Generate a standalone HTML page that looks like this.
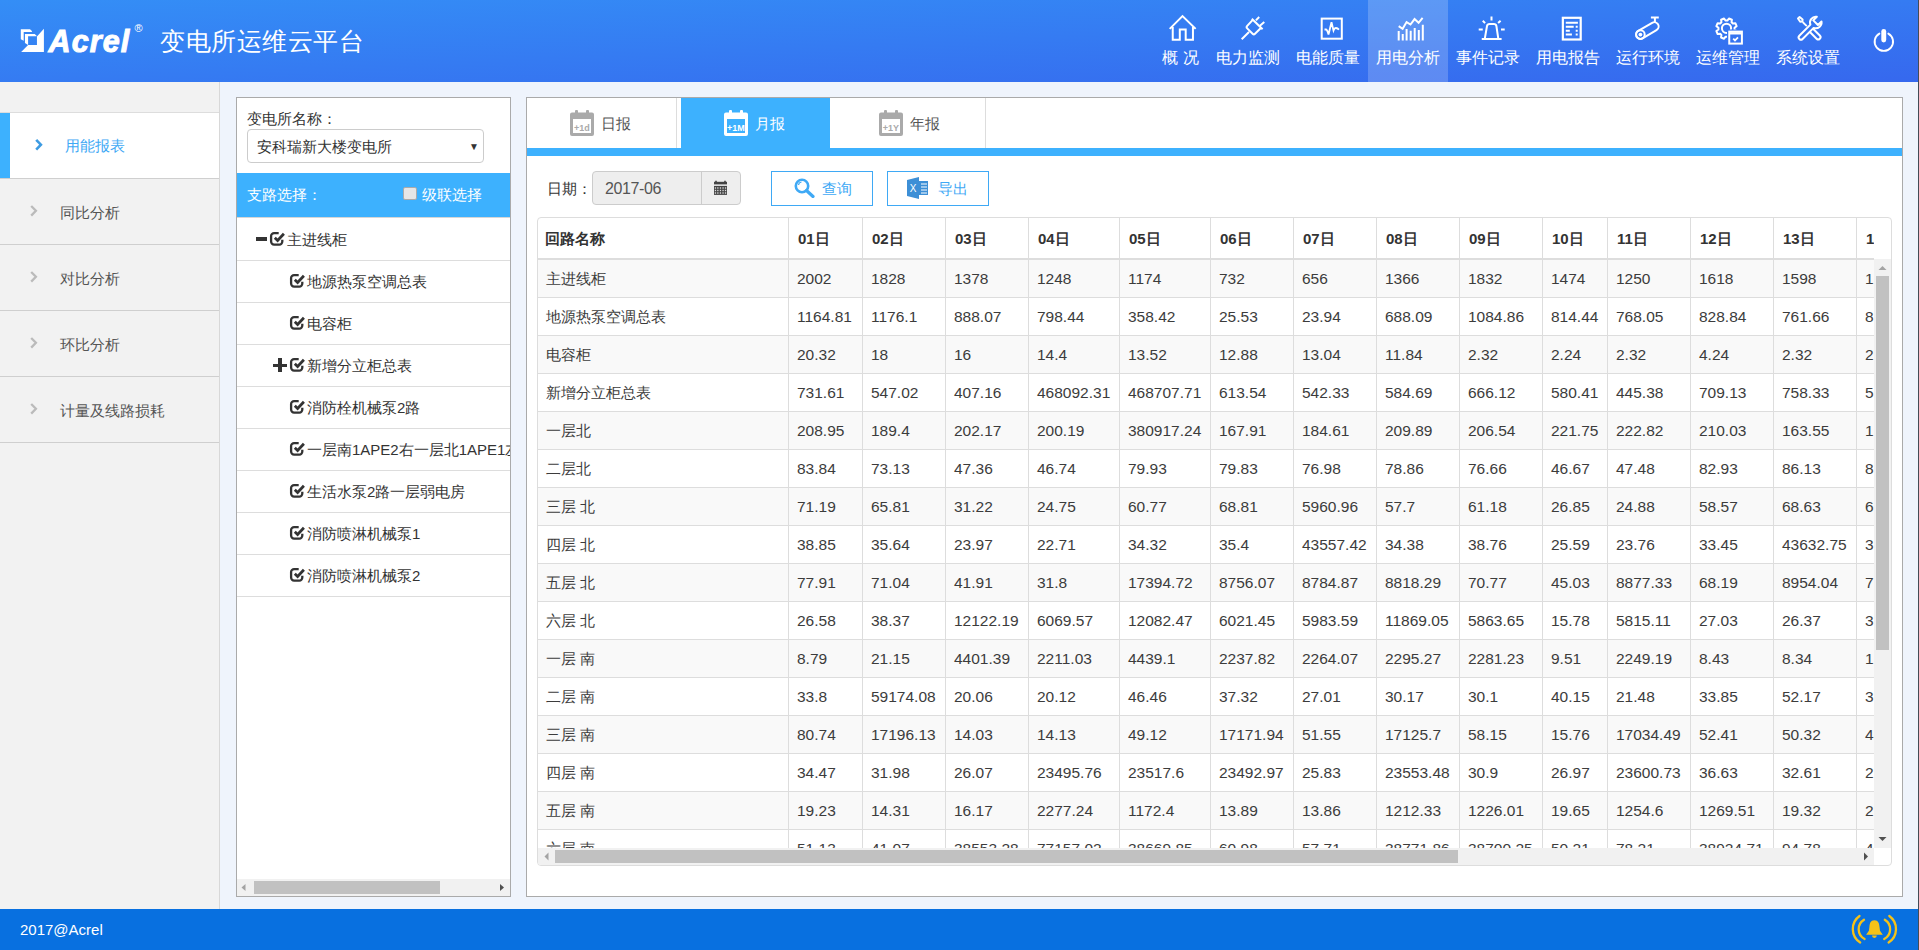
<!DOCTYPE html>
<html><head><meta charset="utf-8">
<style>
*{box-sizing:border-box;margin:0;padding:0}
html,body{width:1919px;height:950px;overflow:hidden}
body{position:relative;background:#eff4fc;font-family:"Liberation Sans",sans-serif;font-size:15px;color:#333}
.abs{position:absolute}
#hdr{left:0;top:0;width:1919px;height:82px;background:linear-gradient(to bottom right,rgb(52,142,246),rgb(54,104,238))}
#hdr .nav{position:absolute;top:0;height:82px;color:#fff;text-align:center}
#hdr .nav .ic{position:absolute;top:14px;left:50%;margin-left:-15px;width:30px;height:30px}
#hdr .nav .tx{position:absolute;top:49px;left:0;width:100%;font-size:15.5px;line-height:18px;white-space:nowrap}
#hdr .nav.act{background:rgba(255,255,255,0.2)}
#side{left:0;top:82px;width:220px;height:827px;background:#f2f2f2;border-right:1px solid #d8d8d8}
.mi{position:absolute;left:0;width:219px;height:66px;border-bottom:1px solid #cfcfcf;color:#555;font-size:15px;line-height:65px}
.mi .chev{position:absolute;left:30px;top:0;color:#bbb}
.mi .t{position:absolute;left:60px;top:0.5px}
.mi.act{background:#fff;color:#3fa9f5}
.mi.act .bar{position:absolute;left:0;top:0;width:10px;height:65px;background:#3db1fe}
.mi.act .chev{left:35px;color:#3fa9f5}
.mi.act .t{left:65px;top:-0.5px}
#pl{left:236px;top:97px;width:275px;height:800px;background:#fff;border:1px solid #aaa}
#pr{left:526px;top:97px;width:1377px;height:800px;background:#fff;border:1px solid #aaa}
.tree-row{position:absolute;left:0;width:273px;height:42px;border-bottom:1px solid #ddd;line-height:41px;white-space:nowrap;overflow:hidden;font-size:15px;color:#333}
.tbl{position:absolute;left:537px;top:217px;width:1355px;height:649px;border:1px solid #ddd;border-radius:4px;background:#fff;overflow:hidden}
.th{position:absolute;top:0;height:40px;line-height:41px;padding-left:9px;font-weight:bold;border-left:1px solid #ddd;white-space:nowrap;overflow:hidden}
.th:first-child{border-left:none;padding-left:8px}
#thead{position:absolute;left:-1px;top:0;width:1337px;height:42px;border-bottom:2px solid #ddd;overflow:hidden}
#tbody{position:absolute;left:-1px;top:42px;width:1337px;height:588px;overflow:hidden}
.tr{position:absolute;left:0;width:1400px;height:38px;border-bottom:1px solid #ddd;background:#fff}
.tr.odd{background:#f9f9f9}
.td{position:absolute;top:0;height:37px;line-height:37px;padding-top:0;padding-left:8px;border-left:1px solid #ddd;white-space:nowrap;overflow:hidden;font-size:15.5px;color:#3c3c3c}
.td:first-child{border-left:none;padding-left:9px;padding-top:0;font-size:15px;line-height:38px}
</style></head><body>

<!-- HEADER -->
<div id="hdr" class="abs">
  <svg class="abs" style="left:18px;top:26px" width="30" height="30" viewBox="0 0 30 30"><g fill="#fff">
    <path d="M2.8 3.2 H12 L13.9 5.1 V6 H5.7 V14.8 L2.8 13.3 Z"/>
    <path d="M6.95 7.9 H16.7 L18.6 9.8 V10.3 H10.1 V19 L6.95 17 Z"/>
    <path d="M25.9 2.85 V25.9 H3.16 L10.1 18.95 H18.95 V10.4 Z"/></g>
  </svg>
  <div class="abs" style="left:48.5px;top:21px;font-size:30.5px;line-height:40px;font-weight:bold;font-style:italic;color:#fff;letter-spacing:1.1px;-webkit-text-stroke:1px #fff">Acrel</div>
  <div class="abs" style="left:134.5px;top:22px;font-size:11px;line-height:12px;color:#fff">&#174;</div>
  <div class="abs" style="left:160px;top:26px;font-size:25px;letter-spacing:0.55px;line-height:30px;color:#fff">变电所运维云平台</div>
  <div class="abs" style="left:1368px;top:0;width:80px;height:82px;background:rgba(255,255,255,0.2)"></div>
  <div class="nav" style="left:1153px;width:55px"><div class="tx">概 况</div></div>
  <div class="nav" style="left:1208px;width:80px"><div class="tx">电力监测</div></div>
  <div class="nav" style="left:1288px;width:80px"><div class="tx">电能质量</div></div>
  <div class="nav" style="left:1368px;width:80px"><div class="tx">用电分析</div></div>
  <div class="nav" style="left:1448px;width:80px"><div class="tx">事件记录</div></div>
  <div class="nav" style="left:1528px;width:80px"><div class="tx">用电报告</div></div>
  <div class="nav" style="left:1608px;width:80px"><div class="tx">运行环境</div></div>
  <div class="nav" style="left:1688px;width:80px"><div class="tx">运维管理</div></div>
  <div class="nav" style="left:1768px;width:80px"><div class="tx">系统设置</div></div>
  <svg class="abs" style="left:0;top:0" width="1919" height="82" viewBox="0 0 1919 82">
   <defs><mask id="gm"><rect x="1700" y="0" width="60" height="60" fill="#fff"/><rect x="1727" y="29.5" width="18" height="18" fill="#000"/></mask></defs>
   <g fill="none" stroke="#fff" stroke-width="2">
    <path d="M1169.7 28.85 L1182.5 16.04 L1195.65 28.85 M1172.74 27 V39.8 H1179.8 V29.5 H1185.7 V39.8 H1192.95 V27"/>
    <path d="M1241.7 39.3 L1249 32 M1251.8 18.7 L1262.6 29.2 M1252.3 20.3 L1247.2 25.9 Q1246 27.2 1247.2 28.4 L1252.6 33.8 Q1253.8 35 1255 33.8 L1260.6 28.2 M1255.9 20.4 L1259.2 17.05 M1260.2 25.5 L1264.3 22.1"/>
    <rect x="1321.7" y="18.6" width="20.1" height="20.1"/>
    <path d="M1324.5 29.5 L1326 29.5 Q1327.3 29.8 1328.5 34.5 L1331.5 22.3 L1333.5 30.5 Q1334.5 27.8 1336 28 Q1337.5 28.2 1339 29.7" stroke-width="1.8"/>
    <path d="M1398.7 40.6 V30.9 M1402.76 40.6 V33.9 M1406.6 40.6 V29 M1410.7 40.6 V30.7 M1414.7 40.6 V28 M1418.8 40.6 V29.9 M1422.8 40.6 V24.8"/>
    <path d="M1398.7 26.15 L1402.6 28.8 L1406.6 22.1 L1410.5 24.5 L1414.55 19.1 L1418.6 22.8 L1422.6 17.9"/>
    <path d="M1491.5 16.5 V20.4 M1482.76 20.76 L1485.1 23.1 M1500.6 20.76 L1498.1 23.1 M1478.7 29.5 H1482.76 M1501 29.5 H1504.7"/>
    <path d="M1484.8 38.6 L1487 26 Q1487.4 24.1 1489.5 24.1 H1493.9 Q1496 24.1 1496.4 26 L1498.3 38.6 M1481.75 39 H1501.6"/>
    <rect x="1562.85" y="17.8" width="17.85" height="21.7" stroke-width="2.2"/>
    <path d="M1565.8 22.8 H1577.9 M1565.8 26.65 H1573.7 M1565.8 30.7 H1569.8 M1565.8 34.6 H1571.9 M1575.7 26.65 H1577.7 M1575.7 30.7 H1577.7 M1575.7 34.6 H1577.7"/>
    <rect x="1635" y="26.25" width="24.7" height="8.6" rx="4.3" transform="rotate(-30.2 1647.35 30.55)"/>
    <circle cx="1640.4" cy="34.6" r="4.3"/>
    <path d="M1654.9 18.2 V22.6 M1650.9 17.56 H1658.8"/>
    <g mask="url(#gm)"><path d="M1734.55 29.49 L1736.61 31.03 L1735.37 34.03 L1732.82 33.66 L1731.56 34.92 L1731.93 37.47 L1728.93 38.71 L1727.39 36.65 L1725.61 36.65 L1724.07 38.71 L1721.07 37.47 L1721.44 34.92 L1720.18 33.66 L1717.63 34.03 L1716.39 31.03 L1718.45 29.49 L1718.45 27.71 L1716.39 26.17 L1717.63 23.17 L1720.18 23.54 L1721.44 22.28 L1721.07 19.73 L1724.07 18.49 L1725.61 20.55 L1727.39 20.55 L1728.93 18.49 L1731.93 19.73 L1731.56 22.28 L1732.82 23.54 L1735.37 23.17 L1736.61 26.17 L1734.55 27.71 Z" stroke-linejoin="round"/>
    <circle cx="1726.5" cy="28.3" r="4.6"/></g>
    <rect x="1729.25" y="31.6" width="12.65" height="12" stroke-width="2"/>
    <path d="M1729.25 33.3 H1741.9" stroke-width="2.4"/>
    <path d="M1733.2 38.6 L1735 40.4 L1738 37.4" stroke-width="1.8"/>
    <g transform="translate(1794 14)" stroke-linejoin="round"><path d="M27.5 7.46 L23.92 11.04 L19.26 6.38 L22.84 2.8 A5.8 5.8 0 0 0 16.41 10.63 L5.32 21.72 A2.3 2.3 0 0 0 8.58 24.98 L19.67 13.89 A5.8 5.8 0 0 0 27.5 7.46 Z"/>
    <path d="M4 4.5 L5.6 3.1 L8.6 5.6 L8.3 7.4 L6.2 7.7 Z"/><path d="M8.6 8 L12.8 12.2" stroke-width="1.8"/>
    <path d="M18.6 14.25 L25.83 21.47 A2.3 2.3 0 0 1 22.57 24.73 L15.9 18.05"/></g>
    <path d="M1879.4 33.6 A9.2 9.2 0 1 0 1888.3 33.6" stroke-width="1.9" stroke-linecap="round"/>
   </g>
   <g fill="#fff"><circle cx="1640.4" cy="34.6" r="1.9"/><rect x="1881.3" y="29" width="4.9" height="13.5" rx="2.45"/></g>
  </svg>
</div>
<div class="abs" style="left:1918px;top:0;width:1px;height:950px;background:#434c56"></div>

<!-- SIDEBAR -->
<div id="side" class="abs">
  <div class="mi act" style="top:30px;border-top:1px solid #ddd;height:67px"><div class="bar"></div><svg class="abs" style="left:0;top:0" width="60" height="66"><path d="M36.2 26.8 L40.9 31.7 L36.2 36.6" fill="none" stroke="#3d9be2" stroke-width="2.6"/></svg><span class="t">用能报表</span></div>
  <div class="mi" style="top:97px"><svg class="abs" style="left:0;top:0" width="60" height="66"><path d="M31.2 27 L35.9 31.8 L31.2 36.6" fill="none" stroke="#bbb" stroke-width="2.3"/></svg><span class="t">同比分析</span></div>
  <div class="mi" style="top:163px"><svg class="abs" style="left:0;top:0" width="60" height="66"><path d="M31.2 27 L35.9 31.8 L31.2 36.6" fill="none" stroke="#bbb" stroke-width="2.3"/></svg><span class="t">对比分析</span></div>
  <div class="mi" style="top:229px"><svg class="abs" style="left:0;top:0" width="60" height="66"><path d="M31.2 27 L35.9 31.8 L31.2 36.6" fill="none" stroke="#bbb" stroke-width="2.3"/></svg><span class="t">环比分析</span></div>
  <div class="mi" style="top:295px"><svg class="abs" style="left:0;top:0" width="60" height="66"><path d="M31.2 27 L35.9 31.8 L31.2 36.6" fill="none" stroke="#bbb" stroke-width="2.3"/></svg><span class="t">计量及线路损耗</span></div>
</div>

<!-- LEFT PANEL -->
<div id="pl" class="abs">
  <div class="abs" style="left:10px;top:11px;line-height:20px">变电所名称：</div>
  <div class="abs" style="left:10px;top:31px;width:237px;height:34px;border:1px solid #ccc;border-radius:4px;line-height:34px;padding-left:9px;font-size:15px">安科瑞新大楼变电所<span class="abs" style="left:221px;top:0;font-size:10px">&#9660;</span></div>
  <div class="abs" style="left:0;top:75px;width:273px;height:44px;background:#3db1fe;color:#fff;line-height:44px;border-bottom:1px solid #d6d6d6;height:45px">
    <span class="abs" style="left:10px">支路选择：</span>
    <span class="abs" style="left:166px;top:14px;width:14px;height:13px;background:#e6e6e6;border:1px solid #aaa;border-radius:2px"></span>
    <span class="abs" style="left:185px">级联选择</span>
  </div>
  <div class="abs" style="left:0;top:121px;width:273px;height:380px">
    <div class="tree-row" style="top:0px"><div class="abs" style="left:18.5px;top:18.2px;width:11px;height:3.7px;background:#333"></div><svg class="abs" style="left:31px;top:11px" width="19" height="18" viewBox="0 0 19 18"><path d="M10.7 3.1 H6.1 A3 3 0 0 0 3.1 6.1 V11.6 A3 3 0 0 0 6.1 14.6 H11.3 A3 3 0 0 0 14.3 11.6 V9.7" fill="none" stroke="#333" stroke-width="2.3"/><path d="M6.8 7.7 L9.6 10.4 L15.9 3.8" fill="none" stroke="#333" stroke-width="2.8"/></svg><span class="abs" style="left:50px">主进线柜</span></div><div class="tree-row" style="top:42px"><svg class="abs" style="left:51px;top:11px" width="19" height="18" viewBox="0 0 19 18"><path d="M10.7 3.1 H6.1 A3 3 0 0 0 3.1 6.1 V11.6 A3 3 0 0 0 6.1 14.6 H11.3 A3 3 0 0 0 14.3 11.6 V9.7" fill="none" stroke="#333" stroke-width="2.3"/><path d="M6.8 7.7 L9.6 10.4 L15.9 3.8" fill="none" stroke="#333" stroke-width="2.8"/></svg><span class="abs" style="left:70px">地源热泵空调总表</span></div><div class="tree-row" style="top:84px"><svg class="abs" style="left:51px;top:11px" width="19" height="18" viewBox="0 0 19 18"><path d="M10.7 3.1 H6.1 A3 3 0 0 0 3.1 6.1 V11.6 A3 3 0 0 0 6.1 14.6 H11.3 A3 3 0 0 0 14.3 11.6 V9.7" fill="none" stroke="#333" stroke-width="2.3"/><path d="M6.8 7.7 L9.6 10.4 L15.9 3.8" fill="none" stroke="#333" stroke-width="2.8"/></svg><span class="abs" style="left:70px">电容柜</span></div><div class="tree-row" style="top:126px"><div class="abs" style="left:36px;top:18.5px;width:14px;height:3.5px;background:#333"></div><div class="abs" style="left:41.2px;top:13.2px;width:3.5px;height:13.6px;background:#333"></div><svg class="abs" style="left:51px;top:11px" width="19" height="18" viewBox="0 0 19 18"><path d="M10.7 3.1 H6.1 A3 3 0 0 0 3.1 6.1 V11.6 A3 3 0 0 0 6.1 14.6 H11.3 A3 3 0 0 0 14.3 11.6 V9.7" fill="none" stroke="#333" stroke-width="2.3"/><path d="M6.8 7.7 L9.6 10.4 L15.9 3.8" fill="none" stroke="#333" stroke-width="2.8"/></svg><span class="abs" style="left:70px">新增分立柜总表</span></div><div class="tree-row" style="top:168px"><svg class="abs" style="left:51px;top:11px" width="19" height="18" viewBox="0 0 19 18"><path d="M10.7 3.1 H6.1 A3 3 0 0 0 3.1 6.1 V11.6 A3 3 0 0 0 6.1 14.6 H11.3 A3 3 0 0 0 14.3 11.6 V9.7" fill="none" stroke="#333" stroke-width="2.3"/><path d="M6.8 7.7 L9.6 10.4 L15.9 3.8" fill="none" stroke="#333" stroke-width="2.8"/></svg><span class="abs" style="left:70px">消防栓机械泵2路</span></div><div class="tree-row" style="top:210px"><svg class="abs" style="left:51px;top:11px" width="19" height="18" viewBox="0 0 19 18"><path d="M10.7 3.1 H6.1 A3 3 0 0 0 3.1 6.1 V11.6 A3 3 0 0 0 6.1 14.6 H11.3 A3 3 0 0 0 14.3 11.6 V9.7" fill="none" stroke="#333" stroke-width="2.3"/><path d="M6.8 7.7 L9.6 10.4 L15.9 3.8" fill="none" stroke="#333" stroke-width="2.8"/></svg><span class="abs" style="left:70px">一层南1APE2右一层北1APE1左</span></div><div class="tree-row" style="top:252px"><svg class="abs" style="left:51px;top:11px" width="19" height="18" viewBox="0 0 19 18"><path d="M10.7 3.1 H6.1 A3 3 0 0 0 3.1 6.1 V11.6 A3 3 0 0 0 6.1 14.6 H11.3 A3 3 0 0 0 14.3 11.6 V9.7" fill="none" stroke="#333" stroke-width="2.3"/><path d="M6.8 7.7 L9.6 10.4 L15.9 3.8" fill="none" stroke="#333" stroke-width="2.8"/></svg><span class="abs" style="left:70px">生活水泵2路一层弱电房</span></div><div class="tree-row" style="top:294px"><svg class="abs" style="left:51px;top:11px" width="19" height="18" viewBox="0 0 19 18"><path d="M10.7 3.1 H6.1 A3 3 0 0 0 3.1 6.1 V11.6 A3 3 0 0 0 6.1 14.6 H11.3 A3 3 0 0 0 14.3 11.6 V9.7" fill="none" stroke="#333" stroke-width="2.3"/><path d="M6.8 7.7 L9.6 10.4 L15.9 3.8" fill="none" stroke="#333" stroke-width="2.8"/></svg><span class="abs" style="left:70px">消防喷淋机械泵1</span></div><div class="tree-row" style="top:336px"><svg class="abs" style="left:51px;top:11px" width="19" height="18" viewBox="0 0 19 18"><path d="M10.7 3.1 H6.1 A3 3 0 0 0 3.1 6.1 V11.6 A3 3 0 0 0 6.1 14.6 H11.3 A3 3 0 0 0 14.3 11.6 V9.7" fill="none" stroke="#333" stroke-width="2.3"/><path d="M6.8 7.7 L9.6 10.4 L15.9 3.8" fill="none" stroke="#333" stroke-width="2.8"/></svg><span class="abs" style="left:70px">消防喷淋机械泵2</span></div>
  </div>
  <div class="abs" style="left:0;top:781px;width:273px;height:17px;background:#f1f1f1">
    <div class="abs" style="left:17px;top:2px;width:186px;height:13px;background:#c1c1c1"></div>
    <svg class="abs" style="left:0;top:0" width="273" height="17"><path d="M8.5 5 L4.5 8.5 L8.5 12 Z" fill="#a3a3a3"/><path d="M263 5 L267 8.5 L263 12 Z" fill="#505050"/></svg>
  </div>
</div>

<!-- RIGHT PANEL -->
<div id="pr" class="abs">
  <div class="abs" style="left:0;top:0;width:150px;height:50px;border-right:1px solid #ddd"></div>
  <div class="abs" style="left:154px;top:0;width:149px;height:50px;background:#3db1fe"></div>
  <div class="abs" style="left:303px;top:0;width:156px;height:50px;border-right:1px solid #ddd"></div>
  <div class="abs" style="left:0;top:50px;width:1375px;height:8px;background:#3db1fe"></div>
  <svg class="abs" style="left:43px;top:12px" width="24" height="26" viewBox="0 0 24 26"><g fill="#aaa"><rect x="5" y="0" width="3" height="4" rx="1"/><rect x="16" y="0" width="3" height="4" rx="1"/><path d="M2 2.5 H22 A2 2 0 0 1 24 4.5 V24 A2 2 0 0 1 22 26 H2 A2 2 0 0 1 0 24 V4.5 A2 2 0 0 1 2 2.5 Z M3 9 V23 H21 V9 Z"/></g><text x="12" y="20.5" text-anchor="middle" font-family="Liberation Sans" font-weight="bold" font-size="9" fill="#aaa">+1d</text></svg><div class="abs" style="left:74px;top:15px;font-size:15px;line-height:22px;color:#555">日报</div><svg class="abs" style="left:197px;top:12px" width="24" height="26" viewBox="0 0 24 26"><g fill="#fff"><rect x="5" y="0" width="3" height="4" rx="1"/><rect x="16" y="0" width="3" height="4" rx="1"/><path d="M2 2.5 H22 A2 2 0 0 1 24 4.5 V24 A2 2 0 0 1 22 26 H2 A2 2 0 0 1 0 24 V4.5 A2 2 0 0 1 2 2.5 Z M3 9 V23 H21 V9 Z"/></g><text x="12" y="20.5" text-anchor="middle" font-family="Liberation Sans" font-weight="bold" font-size="9" fill="#fff">+1M</text></svg><div class="abs" style="left:228px;top:15px;font-size:15px;line-height:22px;color:#fff">月报</div><svg class="abs" style="left:352px;top:12px" width="24" height="26" viewBox="0 0 24 26"><g fill="#aaa"><rect x="5" y="0" width="3" height="4" rx="1"/><rect x="16" y="0" width="3" height="4" rx="1"/><path d="M2 2.5 H22 A2 2 0 0 1 24 4.5 V24 A2 2 0 0 1 22 26 H2 A2 2 0 0 1 0 24 V4.5 A2 2 0 0 1 2 2.5 Z M3 9 V23 H21 V9 Z"/></g><text x="12" y="20.5" text-anchor="middle" font-family="Liberation Sans" font-weight="bold" font-size="9" fill="#aaa">+1Y</text></svg><div class="abs" style="left:383px;top:15px;font-size:15px;line-height:22px;color:#555">年报</div>
  <div class="abs" style="left:20px;top:80px;line-height:22px">日期：</div>
  <div class="abs" style="left:65px;top:73px;width:149px;height:34px;border:1px solid #ccc;border-radius:4px;background:#eee;overflow:hidden">
    <div class="abs" style="left:12px;top:0;line-height:33px;color:#555;font-size:16px;letter-spacing:-0.4px">2017-06</div>
    <div class="abs" style="left:108px;top:0;width:1px;height:32px;background:#ccc"></div>
  </div>
  <div class="abs" style="left:244px;top:73px;width:102px;height:35px;border:1px solid #3fa9f5"></div>
  <div class="abs" style="left:360px;top:73px;width:102px;height:35px;border:1px solid #3fa9f5"></div>
  <svg class="abs" style="left:186px;top:82px" width="15" height="16" viewBox="0 0 15 16"><path d="M2.2 0.8 H3.8 V2 H2.2Z M11.2 0.8 H12.8 V2 H11.2Z" fill="#444"/><rect x="1" y="1.8" width="13" height="2.6" fill="#444"/><rect x="1" y="5.9" width="13" height="9" fill="#444"/><rect x="1.8" y="7.3" width="1.3" height="1.4" fill="#ddd"/><rect x="4.2" y="7.3" width="1.3" height="1.4" fill="#ddd"/><rect x="6.8" y="7.3" width="1.3" height="1.4" fill="#ddd"/><rect x="9.4" y="7.3" width="1.3" height="1.4" fill="#ddd"/><rect x="11.9" y="7.3" width="1.3" height="1.4" fill="#ddd"/><rect x="1.8" y="9.8" width="1.3" height="1.4" fill="#ddd"/><rect x="4.2" y="9.8" width="1.3" height="1.4" fill="#ddd"/><rect x="6.8" y="9.8" width="1.3" height="1.4" fill="#ddd"/><rect x="9.4" y="9.8" width="1.3" height="1.4" fill="#ddd"/><rect x="11.9" y="9.8" width="1.3" height="1.4" fill="#ddd"/><rect x="1.8" y="12.3" width="1.3" height="1.4" fill="#ddd"/><rect x="4.2" y="12.3" width="1.3" height="1.4" fill="#ddd"/><rect x="6.8" y="12.3" width="1.3" height="1.4" fill="#ddd"/><rect x="9.4" y="12.3" width="1.3" height="1.4" fill="#ddd"/><rect x="11.9" y="12.3" width="1.3" height="1.4" fill="#ddd"/></svg><svg class="abs" style="left:267px;top:80px" width="21" height="20" viewBox="0 0 21 20"><circle cx="8" cy="8" r="6.2" fill="none" stroke="#3fa9f5" stroke-width="2.6"/><path d="M12.5 12.5 L19 18.5" stroke="#3fa9f5" stroke-width="3.2" stroke-linecap="round"/><path d="M4.5 7 A3.5 3.5 0 0 1 7.5 4" fill="none" stroke="#3fa9f5" stroke-width="1.2"/></svg><div class="abs" style="left:295px;top:80px;line-height:22px;color:#3fa9f5">查询</div><svg class="abs" style="left:380px;top:79px" width="21" height="22" viewBox="0 0 21 22"><path d="M0 3 L12 0 V22 L0 19 Z" fill="#3d8fd6"/><rect x="12" y="4" width="9" height="14" fill="#3d8fd6"/><path d="M14 7H20 M14 10H20 M14 13H20 M14 16H20" stroke="#fff" stroke-width="1"/><text x="6" y="15" text-anchor="middle" font-family="Liberation Sans" font-size="10" fill="#fff">X</text></svg><div class="abs" style="left:411px;top:80px;line-height:22px;color:#3fa9f5">导出</div>
</div>

<!-- TABLE -->
<div class="tbl">
  <div id="thead"><div class="th" style="left:0px;width:251px">回路名称</div><div class="th" style="left:251px;width:74px">01日</div><div class="th" style="left:325px;width:83px">02日</div><div class="th" style="left:408px;width:83px">03日</div><div class="th" style="left:491px;width:91px">04日</div><div class="th" style="left:582px;width:91px">05日</div><div class="th" style="left:673px;width:83px">06日</div><div class="th" style="left:756px;width:83px">07日</div><div class="th" style="left:839px;width:83px">08日</div><div class="th" style="left:922px;width:83px">09日</div><div class="th" style="left:1005px;width:65px">10日</div><div class="th" style="left:1070px;width:83px">11日</div><div class="th" style="left:1153px;width:83px">12日</div><div class="th" style="left:1236px;width:83px">13日</div><div class="th" style="left:1319px;width:84px">14日</div></div>
  <div id="tbody"><div class="abs" style="left:0;top:0;width:1400px"><div class="tr odd" style="top:0px"><div class="td" style="left:0px;width:251px">主进线柜</div><div class="td" style="left:251px;width:74px">2002</div><div class="td" style="left:325px;width:83px">1828</div><div class="td" style="left:408px;width:83px">1378</div><div class="td" style="left:491px;width:91px">1248</div><div class="td" style="left:582px;width:91px">1174</div><div class="td" style="left:673px;width:83px">732</div><div class="td" style="left:756px;width:83px">656</div><div class="td" style="left:839px;width:83px">1366</div><div class="td" style="left:922px;width:83px">1832</div><div class="td" style="left:1005px;width:65px">1474</div><div class="td" style="left:1070px;width:83px">1250</div><div class="td" style="left:1153px;width:83px">1618</div><div class="td" style="left:1236px;width:83px">1598</div><div class="td" style="left:1319px;width:84px">1</div></div><div class="tr" style="top:38px"><div class="td" style="left:0px;width:251px">地源热泵空调总表</div><div class="td" style="left:251px;width:74px">1164.81</div><div class="td" style="left:325px;width:83px">1176.1</div><div class="td" style="left:408px;width:83px">888.07</div><div class="td" style="left:491px;width:91px">798.44</div><div class="td" style="left:582px;width:91px">358.42</div><div class="td" style="left:673px;width:83px">25.53</div><div class="td" style="left:756px;width:83px">23.94</div><div class="td" style="left:839px;width:83px">688.09</div><div class="td" style="left:922px;width:83px">1084.86</div><div class="td" style="left:1005px;width:65px">814.44</div><div class="td" style="left:1070px;width:83px">768.05</div><div class="td" style="left:1153px;width:83px">828.84</div><div class="td" style="left:1236px;width:83px">761.66</div><div class="td" style="left:1319px;width:84px">8</div></div><div class="tr odd" style="top:76px"><div class="td" style="left:0px;width:251px">电容柜</div><div class="td" style="left:251px;width:74px">20.32</div><div class="td" style="left:325px;width:83px">18</div><div class="td" style="left:408px;width:83px">16</div><div class="td" style="left:491px;width:91px">14.4</div><div class="td" style="left:582px;width:91px">13.52</div><div class="td" style="left:673px;width:83px">12.88</div><div class="td" style="left:756px;width:83px">13.04</div><div class="td" style="left:839px;width:83px">11.84</div><div class="td" style="left:922px;width:83px">2.32</div><div class="td" style="left:1005px;width:65px">2.24</div><div class="td" style="left:1070px;width:83px">2.32</div><div class="td" style="left:1153px;width:83px">4.24</div><div class="td" style="left:1236px;width:83px">2.32</div><div class="td" style="left:1319px;width:84px">2</div></div><div class="tr" style="top:114px"><div class="td" style="left:0px;width:251px">新增分立柜总表</div><div class="td" style="left:251px;width:74px">731.61</div><div class="td" style="left:325px;width:83px">547.02</div><div class="td" style="left:408px;width:83px">407.16</div><div class="td" style="left:491px;width:91px">468092.31</div><div class="td" style="left:582px;width:91px">468707.71</div><div class="td" style="left:673px;width:83px">613.54</div><div class="td" style="left:756px;width:83px">542.33</div><div class="td" style="left:839px;width:83px">584.69</div><div class="td" style="left:922px;width:83px">666.12</div><div class="td" style="left:1005px;width:65px">580.41</div><div class="td" style="left:1070px;width:83px">445.38</div><div class="td" style="left:1153px;width:83px">709.13</div><div class="td" style="left:1236px;width:83px">758.33</div><div class="td" style="left:1319px;width:84px">5</div></div><div class="tr odd" style="top:152px"><div class="td" style="left:0px;width:251px">一层北</div><div class="td" style="left:251px;width:74px">208.95</div><div class="td" style="left:325px;width:83px">189.4</div><div class="td" style="left:408px;width:83px">202.17</div><div class="td" style="left:491px;width:91px">200.19</div><div class="td" style="left:582px;width:91px">380917.24</div><div class="td" style="left:673px;width:83px">167.91</div><div class="td" style="left:756px;width:83px">184.61</div><div class="td" style="left:839px;width:83px">209.89</div><div class="td" style="left:922px;width:83px">206.54</div><div class="td" style="left:1005px;width:65px">221.75</div><div class="td" style="left:1070px;width:83px">222.82</div><div class="td" style="left:1153px;width:83px">210.03</div><div class="td" style="left:1236px;width:83px">163.55</div><div class="td" style="left:1319px;width:84px">1</div></div><div class="tr" style="top:190px"><div class="td" style="left:0px;width:251px">二层北</div><div class="td" style="left:251px;width:74px">83.84</div><div class="td" style="left:325px;width:83px">73.13</div><div class="td" style="left:408px;width:83px">47.36</div><div class="td" style="left:491px;width:91px">46.74</div><div class="td" style="left:582px;width:91px">79.93</div><div class="td" style="left:673px;width:83px">79.83</div><div class="td" style="left:756px;width:83px">76.98</div><div class="td" style="left:839px;width:83px">78.86</div><div class="td" style="left:922px;width:83px">76.66</div><div class="td" style="left:1005px;width:65px">46.67</div><div class="td" style="left:1070px;width:83px">47.48</div><div class="td" style="left:1153px;width:83px">82.93</div><div class="td" style="left:1236px;width:83px">86.13</div><div class="td" style="left:1319px;width:84px">8</div></div><div class="tr odd" style="top:228px"><div class="td" style="left:0px;width:251px">三层 北</div><div class="td" style="left:251px;width:74px">71.19</div><div class="td" style="left:325px;width:83px">65.81</div><div class="td" style="left:408px;width:83px">31.22</div><div class="td" style="left:491px;width:91px">24.75</div><div class="td" style="left:582px;width:91px">60.77</div><div class="td" style="left:673px;width:83px">68.81</div><div class="td" style="left:756px;width:83px">5960.96</div><div class="td" style="left:839px;width:83px">57.7</div><div class="td" style="left:922px;width:83px">61.18</div><div class="td" style="left:1005px;width:65px">26.85</div><div class="td" style="left:1070px;width:83px">24.88</div><div class="td" style="left:1153px;width:83px">58.57</div><div class="td" style="left:1236px;width:83px">68.63</div><div class="td" style="left:1319px;width:84px">6</div></div><div class="tr" style="top:266px"><div class="td" style="left:0px;width:251px">四层 北</div><div class="td" style="left:251px;width:74px">38.85</div><div class="td" style="left:325px;width:83px">35.64</div><div class="td" style="left:408px;width:83px">23.97</div><div class="td" style="left:491px;width:91px">22.71</div><div class="td" style="left:582px;width:91px">34.32</div><div class="td" style="left:673px;width:83px">35.4</div><div class="td" style="left:756px;width:83px">43557.42</div><div class="td" style="left:839px;width:83px">34.38</div><div class="td" style="left:922px;width:83px">38.76</div><div class="td" style="left:1005px;width:65px">25.59</div><div class="td" style="left:1070px;width:83px">23.76</div><div class="td" style="left:1153px;width:83px">33.45</div><div class="td" style="left:1236px;width:83px">43632.75</div><div class="td" style="left:1319px;width:84px">3</div></div><div class="tr odd" style="top:304px"><div class="td" style="left:0px;width:251px">五层 北</div><div class="td" style="left:251px;width:74px">77.91</div><div class="td" style="left:325px;width:83px">71.04</div><div class="td" style="left:408px;width:83px">41.91</div><div class="td" style="left:491px;width:91px">31.8</div><div class="td" style="left:582px;width:91px">17394.72</div><div class="td" style="left:673px;width:83px">8756.07</div><div class="td" style="left:756px;width:83px">8784.87</div><div class="td" style="left:839px;width:83px">8818.29</div><div class="td" style="left:922px;width:83px">70.77</div><div class="td" style="left:1005px;width:65px">45.03</div><div class="td" style="left:1070px;width:83px">8877.33</div><div class="td" style="left:1153px;width:83px">68.19</div><div class="td" style="left:1236px;width:83px">8954.04</div><div class="td" style="left:1319px;width:84px">7</div></div><div class="tr" style="top:342px"><div class="td" style="left:0px;width:251px">六层 北</div><div class="td" style="left:251px;width:74px">26.58</div><div class="td" style="left:325px;width:83px">38.37</div><div class="td" style="left:408px;width:83px">12122.19</div><div class="td" style="left:491px;width:91px">6069.57</div><div class="td" style="left:582px;width:91px">12082.47</div><div class="td" style="left:673px;width:83px">6021.45</div><div class="td" style="left:756px;width:83px">5983.59</div><div class="td" style="left:839px;width:83px">11869.05</div><div class="td" style="left:922px;width:83px">5863.65</div><div class="td" style="left:1005px;width:65px">15.78</div><div class="td" style="left:1070px;width:83px">5815.11</div><div class="td" style="left:1153px;width:83px">27.03</div><div class="td" style="left:1236px;width:83px">26.37</div><div class="td" style="left:1319px;width:84px">3</div></div><div class="tr odd" style="top:380px"><div class="td" style="left:0px;width:251px">一层 南</div><div class="td" style="left:251px;width:74px">8.79</div><div class="td" style="left:325px;width:83px">21.15</div><div class="td" style="left:408px;width:83px">4401.39</div><div class="td" style="left:491px;width:91px">2211.03</div><div class="td" style="left:582px;width:91px">4439.1</div><div class="td" style="left:673px;width:83px">2237.82</div><div class="td" style="left:756px;width:83px">2264.07</div><div class="td" style="left:839px;width:83px">2295.27</div><div class="td" style="left:922px;width:83px">2281.23</div><div class="td" style="left:1005px;width:65px">9.51</div><div class="td" style="left:1070px;width:83px">2249.19</div><div class="td" style="left:1153px;width:83px">8.43</div><div class="td" style="left:1236px;width:83px">8.34</div><div class="td" style="left:1319px;width:84px">1</div></div><div class="tr" style="top:418px"><div class="td" style="left:0px;width:251px">二层 南</div><div class="td" style="left:251px;width:74px">33.8</div><div class="td" style="left:325px;width:83px">59174.08</div><div class="td" style="left:408px;width:83px">20.06</div><div class="td" style="left:491px;width:91px">20.12</div><div class="td" style="left:582px;width:91px">46.46</div><div class="td" style="left:673px;width:83px">37.32</div><div class="td" style="left:756px;width:83px">27.01</div><div class="td" style="left:839px;width:83px">30.17</div><div class="td" style="left:922px;width:83px">30.1</div><div class="td" style="left:1005px;width:65px">40.15</div><div class="td" style="left:1070px;width:83px">21.48</div><div class="td" style="left:1153px;width:83px">33.85</div><div class="td" style="left:1236px;width:83px">52.17</div><div class="td" style="left:1319px;width:84px">3</div></div><div class="tr odd" style="top:456px"><div class="td" style="left:0px;width:251px">三层 南</div><div class="td" style="left:251px;width:74px">80.74</div><div class="td" style="left:325px;width:83px">17196.13</div><div class="td" style="left:408px;width:83px">14.03</div><div class="td" style="left:491px;width:91px">14.13</div><div class="td" style="left:582px;width:91px">49.12</div><div class="td" style="left:673px;width:83px">17171.94</div><div class="td" style="left:756px;width:83px">51.55</div><div class="td" style="left:839px;width:83px">17125.7</div><div class="td" style="left:922px;width:83px">58.15</div><div class="td" style="left:1005px;width:65px">15.76</div><div class="td" style="left:1070px;width:83px">17034.49</div><div class="td" style="left:1153px;width:83px">52.41</div><div class="td" style="left:1236px;width:83px">50.32</div><div class="td" style="left:1319px;width:84px">4</div></div><div class="tr" style="top:494px"><div class="td" style="left:0px;width:251px">四层 南</div><div class="td" style="left:251px;width:74px">34.47</div><div class="td" style="left:325px;width:83px">31.98</div><div class="td" style="left:408px;width:83px">26.07</div><div class="td" style="left:491px;width:91px">23495.76</div><div class="td" style="left:582px;width:91px">23517.6</div><div class="td" style="left:673px;width:83px">23492.97</div><div class="td" style="left:756px;width:83px">25.83</div><div class="td" style="left:839px;width:83px">23553.48</div><div class="td" style="left:922px;width:83px">30.9</div><div class="td" style="left:1005px;width:65px">26.97</div><div class="td" style="left:1070px;width:83px">23600.73</div><div class="td" style="left:1153px;width:83px">36.63</div><div class="td" style="left:1236px;width:83px">32.61</div><div class="td" style="left:1319px;width:84px">2</div></div><div class="tr odd" style="top:532px"><div class="td" style="left:0px;width:251px">五层 南</div><div class="td" style="left:251px;width:74px">19.23</div><div class="td" style="left:325px;width:83px">14.31</div><div class="td" style="left:408px;width:83px">16.17</div><div class="td" style="left:491px;width:91px">2277.24</div><div class="td" style="left:582px;width:91px">1172.4</div><div class="td" style="left:673px;width:83px">13.89</div><div class="td" style="left:756px;width:83px">13.86</div><div class="td" style="left:839px;width:83px">1212.33</div><div class="td" style="left:922px;width:83px">1226.01</div><div class="td" style="left:1005px;width:65px">19.65</div><div class="td" style="left:1070px;width:83px">1254.6</div><div class="td" style="left:1153px;width:83px">1269.51</div><div class="td" style="left:1236px;width:83px">19.32</div><div class="td" style="left:1319px;width:84px">2</div></div><div class="tr" style="top:570px"><div class="td" style="left:0px;width:251px">六层 南</div><div class="td" style="left:251px;width:74px">51.13</div><div class="td" style="left:325px;width:83px">41.07</div><div class="td" style="left:408px;width:83px">38553.28</div><div class="td" style="left:491px;width:91px">77157.02</div><div class="td" style="left:582px;width:91px">38669.85</div><div class="td" style="left:673px;width:83px">60.98</div><div class="td" style="left:756px;width:83px">57.71</div><div class="td" style="left:839px;width:83px">38771.86</div><div class="td" style="left:922px;width:83px">38700.25</div><div class="td" style="left:1005px;width:65px">50.21</div><div class="td" style="left:1070px;width:83px">78.21</div><div class="td" style="left:1153px;width:83px">38924.71</div><div class="td" style="left:1236px;width:83px">94.78</div><div class="td" style="left:1319px;width:84px">4</div></div></div></div>
  <div class="abs" style="left:1336px;top:41px;width:17px;height:589px;background:#f1f1f1">
    <div class="abs" style="left:2px;top:17px;width:13px;height:374px;background:#c1c1c1"></div>
    <svg class="abs" style="left:0;top:0" width="17" height="589"><path d="M4.5 11 L8.5 7 L12.5 11 Z" fill="#a3a3a3"/><path d="M4.5 578 L8.5 582 L12.5 578 Z" fill="#505050"/></svg>
  </div>
  <div class="abs" style="left:0;top:630px;width:1336px;height:17px;background:#f1f1f1">
    <div class="abs" style="left:17px;top:2px;width:903px;height:13px;background:#c1c1c1"></div>
    <svg class="abs" style="left:0;top:0" width="1336" height="17"><path d="M10.5 4.5 L6.5 8.5 L10.5 12.5 Z" fill="#a3a3a3"/><path d="M1326 4.5 L1330 8.5 L1326 12.5 Z" fill="#505050"/></svg>
  </div>
</div>

<!-- FOOTER -->
<div class="abs" style="left:0;top:909px;width:1918px;height:41px;background:#0870e0">
  <div class="abs" style="left:20px;top:11px;line-height:20px;color:#fff;font-size:15px">2017@Acrel</div>
  <svg class="abs" style="left:1840px;top:0" width="70" height="41" viewBox="0 0 70 41">
   <g fill="none" stroke="#f5c218" stroke-width="2.3" stroke-linecap="round">
    <path d="M19.5 7 A16 16 0 0 0 20.2 33.5"/><path d="M24 10.8 A11 11 0 0 0 24.6 30"/>
    <path d="M49.3 7 A16 16 0 0 1 48.6 33.5"/><path d="M44.8 10.8 A11 11 0 0 1 44.2 30"/>
   </g>
   <path d="M34.4 11.2 C30.6 11.2 29.6 14.3 29.4 18 L28.9 21.8 L26.1 25.8 H42.8 L40 21.8 L39.5 18 C39.3 14.3 38.2 11.2 34.4 11.2 Z M32 26.6 A2.4 2.3 0 0 0 36.8 26.6 Z" fill="#f5c218"/>
  </svg>
</div>
</body></html>
